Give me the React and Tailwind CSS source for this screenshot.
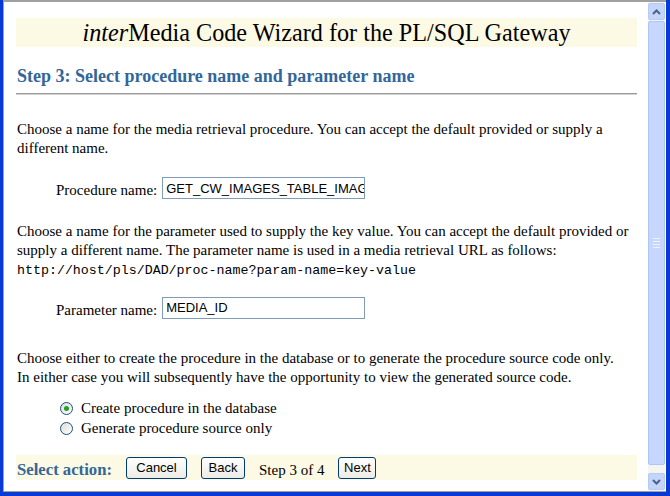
import React from 'react';

const serif = { fontFamily: '"Liberation Serif", "Times New Roman", serif' };

function Radio({ checked }) {
  return (
    <span className="relative inline-flex items-center justify-center w-[13px] h-[13px] rounded-full border border-[#1c5180] bg-gradient-to-br from-[#dcdcd7] to-white shrink-0">
      {checked && <span className="w-[5px] h-[5px] rounded-full bg-[#21a121]" />}
    </span>
  );
}

function XpButton({ children, width }) {
  return (
    <button
      className={`${width} h-[22px] rounded-[3px] border border-[#003c74] bg-gradient-to-b from-white to-[#ecebe6] text-[13px] text-black leading-none font-['Liberation_Sans',Arial,sans-serif]`}
    >
      {children}
    </button>
  );
}

function Chevron({ up }) {
  return (
    <svg width="9" height="6" viewBox="0 0 9 6">
      <path
        d={up ? 'M1 5 L4.5 1.5 L8 5' : 'M1 1 L4.5 4.5 L8 1'}
        fill="none"
        stroke="#4d6185"
        strokeWidth="2"
      />
    </svg>
  );
}

export default function App() {
  return (
    <div className="w-[670px] h-[496px] bg-[#0a3ad6] flex flex-col pl-[3px] pr-[4px] pb-[4px]">
      <div className="flex-1 min-h-0 flex bg-white border-t-2 border-l border-b border-[#a0a0a0]">
        {/* Page content */}
        <div className="flex-1 min-w-0 pl-[12px] pr-[11px] text-black" style={serif}>
          {/* Title band */}
          <div className="mt-[16px] h-[29px] leading-[29px] bg-[#fcf9e4] text-center text-[24.2px]">
            <i>inter</i>Media Code Wizard for the PL/SQL Gateway
          </div>

          <h2 className="mt-[18px] text-[18px] leading-[22px] font-bold text-[#336699] pl-[1px]">
            Step 3: Select procedure name and parameter name
          </h2>
          <div className="mt-[6px] h-[2px] border-t border-[#9a9a9a] border-b border-b-[#d4d4d4]" />

          <p className="mt-[25px] text-[15px] leading-[19px] pl-[1px]">
            Choose a name for the media retrieval procedure. You can accept the default provided or supply a
            different name.
          </p>

          <div className="mt-[17px] flex items-center pl-[40px] text-[15px]">
            <span className="pt-[4px]">Procedure name:</span>
            <input
              readOnly
              value="GET_CW_IMAGES_TABLE_IMAGE"
              className="ml-[5px] w-[203px] h-[22px] border border-[#7f9db9] pl-[3px] text-[13px] text-black outline-none font-['Liberation_Sans',Arial,sans-serif]"
            />
          </div>

          <div className="mt-[20px] pl-[1px]">
            <p className="text-[15px] leading-[19px]">
              Choose a name for the parameter used to supply the key value. You can accept the default provided or
              supply a different name. The parameter name is used in a media retrieval URL as follows:
            </p>
            <div className="h-[19px] leading-[21px] text-[13.3px] font-['Liberation_Mono','Courier_New',monospace]">
              http://host/pls/DAD/proc-name?param-name=key-value
            </div>
          </div>

          <div className="mt-[16px] flex items-center pl-[40px] text-[15px]">
            <span className="pt-[4px]">Parameter name:</span>
            <input
              readOnly
              value="MEDIA_ID"
              className="ml-[5px] w-[203px] h-[22px] border border-[#7f9db9] pl-[3px] text-[13px] text-black outline-none font-['Liberation_Sans',Arial,sans-serif]"
            />
          </div>

          <p className="mt-[28px] max-w-[612px] text-[15px] leading-[19px] pl-[1px]">
            Choose either to create the procedure in the database or to generate the procedure source code only.
            In either case you will subsequently have the opportunity to view the generated source code.
          </p>

          <div className="mt-[11px] pl-[44px] text-[15px]">
            <label className="flex items-center h-[20px] gap-[8px]">
              <Radio checked />
              <span>Create procedure in the database</span>
            </label>
            <label className="flex items-center h-[20px] gap-[8px]">
              <Radio />
              <span>Generate procedure source only</span>
            </label>
          </div>

          {/* Action band */}
          <div className="mt-[17px] h-[25px] bg-[#fcf9e4] flex items-center gap-[14px] pl-[1px]">
            <span className="text-[16.7px] font-bold text-[#336699] pt-[4px]">Select action:</span>
            <XpButton width="w-[61px]">Cancel</XpButton>
            <XpButton width="w-[44px]">Back</XpButton>
            <span className="text-[15px] pt-[5px]">Step 3 of 4</span>
            <XpButton width="w-[38px]">Next</XpButton>
          </div>
        </div>

        {/* Scrollbar */}
        <div className="w-[17px] mr-[1px] flex flex-col py-[1px] bg-[#f4f4f0]">
          <div className="h-[17px] rounded-[2px] border border-[#b7caf5] bg-[#c4d5fc] flex items-center justify-center">
            <Chevron up />
          </div>
          <div className="flex-1 mt-[1px] mb-[8px] rounded-[2px] border border-[#b0c5f5] bg-[#c6d6fc] flex flex-col items-center justify-center gap-[2px]">
            <div className="w-[7px] h-px bg-[#eef3fe]" />
            <div className="w-[7px] h-px bg-[#eef3fe]" />
            <div className="w-[7px] h-px bg-[#eef3fe]" />
            <div className="w-[7px] h-px bg-[#eef3fe]" />
          </div>
          <div className="h-[17px] rounded-[2px] border border-[#b7caf5] bg-[#c4d5fc] flex items-center justify-center">
            <Chevron />
          </div>
        </div>
      </div>
    </div>
  );
}
